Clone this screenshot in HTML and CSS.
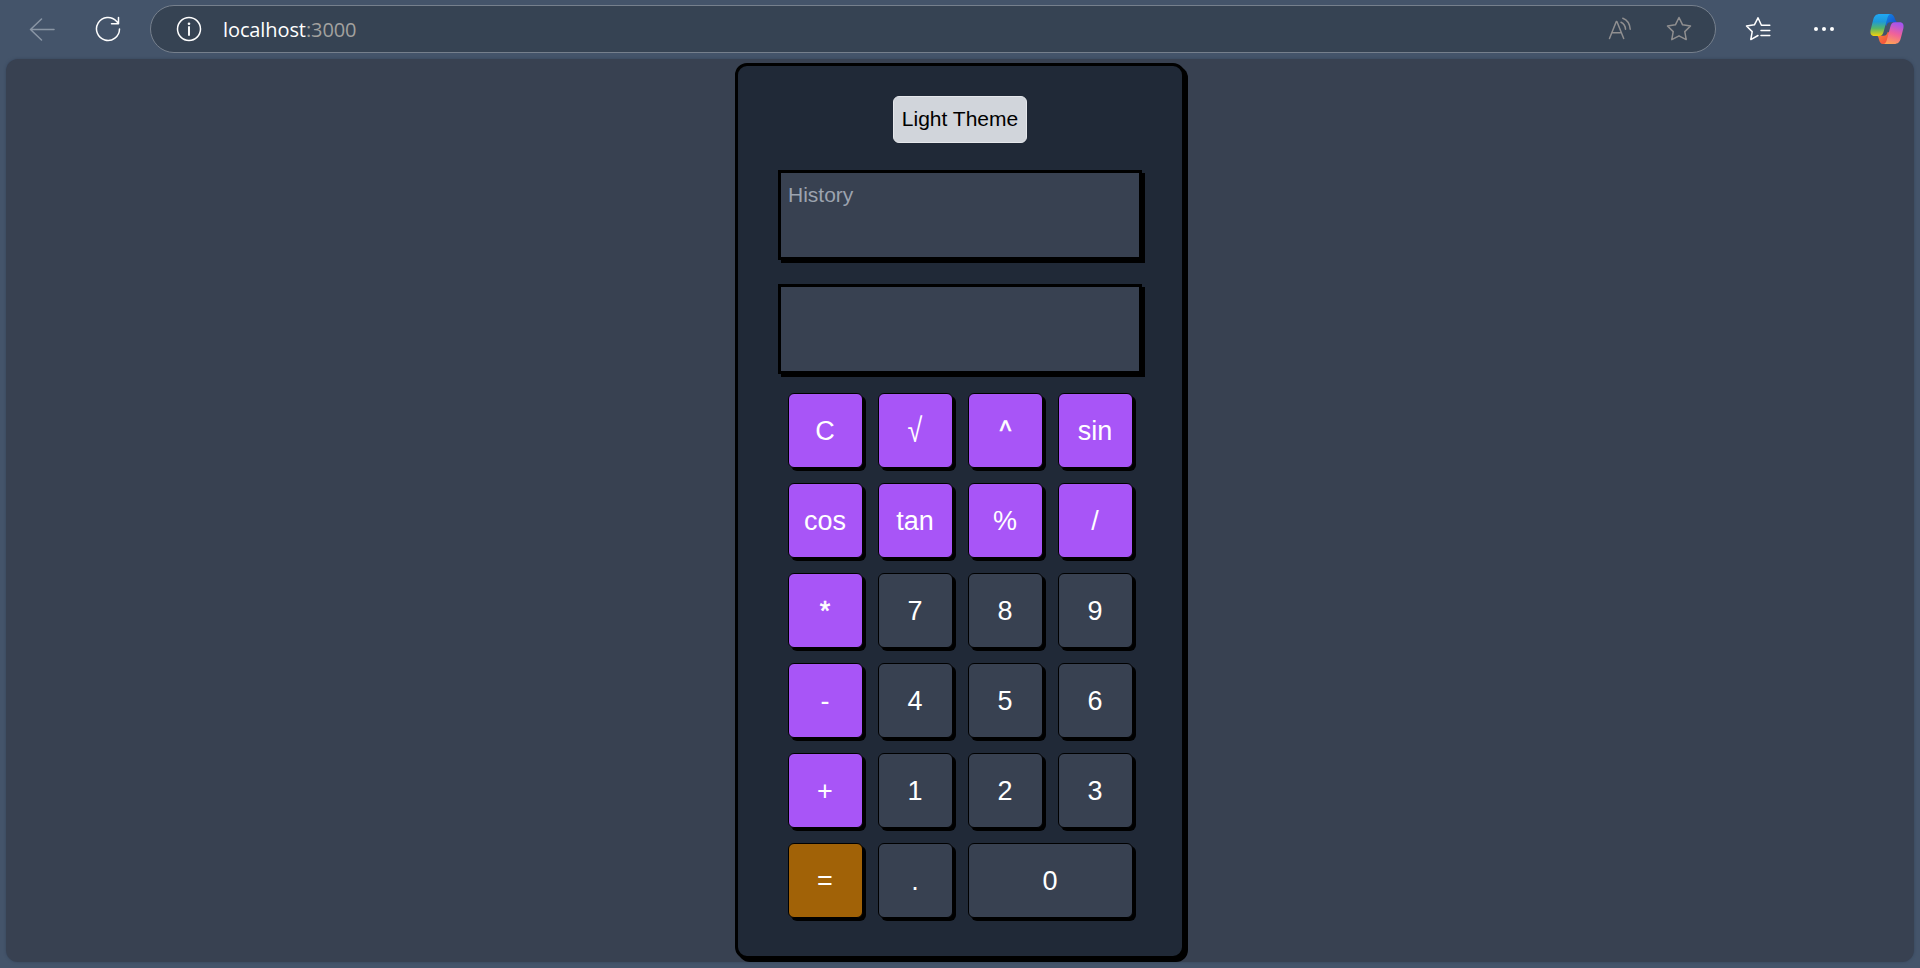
FILE: index.html
```html
<!DOCTYPE html>
<html lang="en">
<head>
<meta charset="utf-8">
<title>Calculator</title>
<link rel="stylesheet" href="styles.css">
</head>
<body>
<header class="toolbar">
  <svg class="icon back" viewBox="0 0 26 24"><path d="M25 12.5H1.5M12.5 2 1.5 12.5l11 10.500"/></svg>
  <svg class="icon reload" viewBox="0 0 26 26"><path d="M24.500 13A11.500 11.500 0 1 1 21.500 5.200L23.500 7.500M23.500 1.500v6.200H16.500"/></svg>
  <div class="address">
    <svg class="icon info" viewBox="0 0 26 26"><circle cx="13" cy="13" r="11.500"/><path d="M13 11v8" stroke-width="1.900"/><circle class="dot" cx="13" cy="7.800" r="1.300"/></svg>
    <span class="url"><span class="host">localhost</span><span class="port">:3000</span></span>
    <svg class="icon aloud" viewBox="0 0 24 24"><path d="M1.500 21.500 8.300 4.500h.6l6.800 17M4 15.700h9.300M13 5.200c3 1.300 4.300 3.800 4.500 7M14.800 1.300c4.500 1.700 7 5.700 7.400 11"/></svg>
    <svg class="icon star" viewBox="0 0 26 26"><path d="M13 1.500 16.600 8.800 24.500 10 18.800 15.600 20.200 23.600 13 19.800 5.800 23.600 7.200 15.600 1.500 10 9.400 8.800Z"/></svg>
  </div>
  <svg class="icon favorites" viewBox="0 0 26 26"><path d="M24.800 9.200H16.400L13 1.800 9.400 8.800 1.500 10 7.200 15.600 5.800 23.600 13 19.500M16 14.500h8.800M16 19.500h8.800"/></svg>
  <svg class="icon more" viewBox="0 0 22 6"><circle class="dot" cx="3" cy="3" r="2"/><circle class="dot" cx="11" cy="3" r="2"/><circle class="dot" cx="19" cy="3" r="2"/></svg>
  <svg class="copilot" viewBox="0 0 34 30">
    <defs>
      <linearGradient id="cool" x1="0" y1="0" x2="0" y2="1"><stop offset="0" stop-color="#20a8f4"/><stop offset=".35" stop-color="#1e99d8"/><stop offset=".65" stop-color="#55b66b"/><stop offset="1" stop-color="#f4d00b"/></linearGradient>
      <linearGradient id="warm" x1=".6" y1="0" x2=".3" y2="1"><stop offset="0" stop-color="#a354ef"/><stop offset=".5" stop-color="#f0619a"/><stop offset="1" stop-color="#ffa454"/></linearGradient>
      <linearGradient id="blue" x1="0" y1="0" x2="1" y2="1"><stop offset="0" stop-color="#138be8"/><stop offset="1" stop-color="#1542c4"/></linearGradient>
      <linearGradient id="red" x1="0" y1="0" x2="1" y2="1"><stop offset="0" stop-color="#f98838"/><stop offset="1" stop-color="#f4433f"/></linearGradient>
    </defs>
    <path fill="url(#blue)" d="M14 0h6c3 0 4 2 5 5 .8 2.500 1.500 3.300 3.500 3.300h-8.500c-2 0-3 1.500-3.800 4L14 8Z"/>
    <path fill="url(#red)" d="M7 21.800h6.800c2.200 0 3.200-1.500 4-4L21 20l-2 6c-.8 2.500-2 4-4 4h-2c-2.300 0-3.200-1.700-4-4.500-.6-2.200-.8-3.200-2-3.700Z"/>
    <path fill="url(#cool)" d="M10 0h11c-2 0-3 1.800-3.600 4L13.800 17c-.9 3.200-1.800 5-4.800 5H4.500C.8 22 0 19.500.6 16L3 6.500C4 2 6 0 10 0Z"/>
    <path fill="url(#warm)" d="M25 8.300h4.500c3.700 0 4.500 2.500 3.900 6L31 23.500C30 28 28 30 24 30H13c2.300 0 3.200-1.800 3.800-4l3.400-12.700c.9-3.200 1.800-5 4.800-5Z"/>
  </svg>
</header>
<main class="page">
  <section class="calculator">
    <button class="theme">Light Theme</button>
    <div class="screen">History</div>
    <div class="screen"></div>
    <div class="keys">
      <button class="key op">C</button><button class="key op"><span class="root">√</span></button><button class="key op"><span class="caret">^</span></button><button class="key op">sin</button>
      <button class="key op">cos</button><button class="key op">tan</button><button class="key op">%</button><button class="key op">/</button>
      <button class="key op heavy">*</button><button class="key">7</button><button class="key">8</button><button class="key">9</button>
      <button class="key op">-</button><button class="key">4</button><button class="key">5</button><button class="key">6</button>
      <button class="key op">+</button><button class="key">1</button><button class="key">2</button><button class="key">3</button>
      <button class="key equals">=</button><button class="key">.</button><button class="key wide">0</button>
    </div>
  </section>
</main>
</body>
</html>
```

FILE: styles.css
```css
* { box-sizing: border-box; }
body {
  margin: 0;
  height: 968px;
  overflow: hidden;
  background: #44546a;
  font-family: "Liberation Sans", Arial, sans-serif;
}
button { font-family: inherit; margin: 0; padding: 0; }

.toolbar {
  display: flex;
  align-items: center;
  height: 59px;
  padding: 0 16px 1px 29px;
}
.icon {
  flex: none;
  fill: none;
  stroke: #fff;
  stroke-width: 1.5;
  stroke-linejoin: round;
  stroke-linecap: round;
}
.dot { fill: #fff; stroke: none; }
.back { width: 26px; height: 24px; stroke: #8a96a5; }
.reload { width: 26px; height: 26px; margin-left: 40px; }
.address {
  display: flex;
  align-items: center;
  width: 1566px;
  height: 48px;
  margin-left: 29px;
  padding: 0 23px 0 25px;
  border: 1px solid #76808d;
  border-radius: 24px;
  background: #364353;
}
.info { width: 26px; height: 26px; }
.url {
  flex: 1;
  margin: 2px 0 0 21px;
  font: 20px/28px "Open Sans", "Noto Sans", sans-serif;
  letter-spacing: -0.1px;
}
.host { color: #fff; }
.port { color: #a2a19f; }
.aloud { width: 24px; height: 24px; margin-right: 34px; stroke: #908f90; }
.star { width: 26px; height: 26px; stroke: #908f90; }
.favorites { width: 26px; height: 26px; margin-left: 29px; }
.more { width: 22px; height: 6px; margin-left: 42px; }
.copilot { width: 34px; height: 30px; margin-left: auto; }

.page {
  display: flex;
  justify-content: center;
  height: 903px;
  margin: 0 6px;
  padding-top: 4px;
  border-radius: 12px;
  background: #384151;
  box-shadow: 0 0 3px #35445a;
}
.calculator {
  display: flex;
  flex-direction: column;
  align-items: center;
  width: 450px;
  height: 896px;
  padding-top: 30px;
  border: 3px solid #000;
  border-radius: 12px;
  background: #202937;
  box-shadow: 3px 3px #000;
}
.theme {
  width: 134px;
  height: 47px;
  margin-bottom: 27px;
  padding-bottom: 2px;
  border: 1px solid #e5e7eb;
  border-radius: 6px;
  background: #d1d5db;
  color: #000;
  font-size: 21px;
  white-space: nowrap;
}
.screen {
  width: 364px;
  height: 90px;
  margin-bottom: 24px;
  padding: 7px;
  border: 3px solid #000;
  background: #384151;
  box-shadow: 3px 3px #000;
  color: #9ca3af;
  font-size: 21px;
  line-height: 30px;
}
.keys {
  display: grid;
  grid-template-columns: repeat(4, 75px);
  grid-auto-rows: 75px;
  gap: 15px;
  margin-top: -5px;
}
.key {
  padding-top: 2px;
  border: 1px solid #000;
  border-radius: 6px;
  background: #384151;
  box-shadow: 3px 3px #000;
  color: #fff;
  font-size: 27px;
}
.op { background: #a855f7; }
.equals { background: #a16207; }
.wide { grid-column: span 2; }
.heavy { -webkit-text-stroke: 0.6px #fff; }
.root { display: inline-block; transform: scaleY(1.25); }
.caret {
  display: inline-block;
  transform: scale(0.9, 1.1);
  -webkit-text-stroke: 0.6px #fff;
}
```
